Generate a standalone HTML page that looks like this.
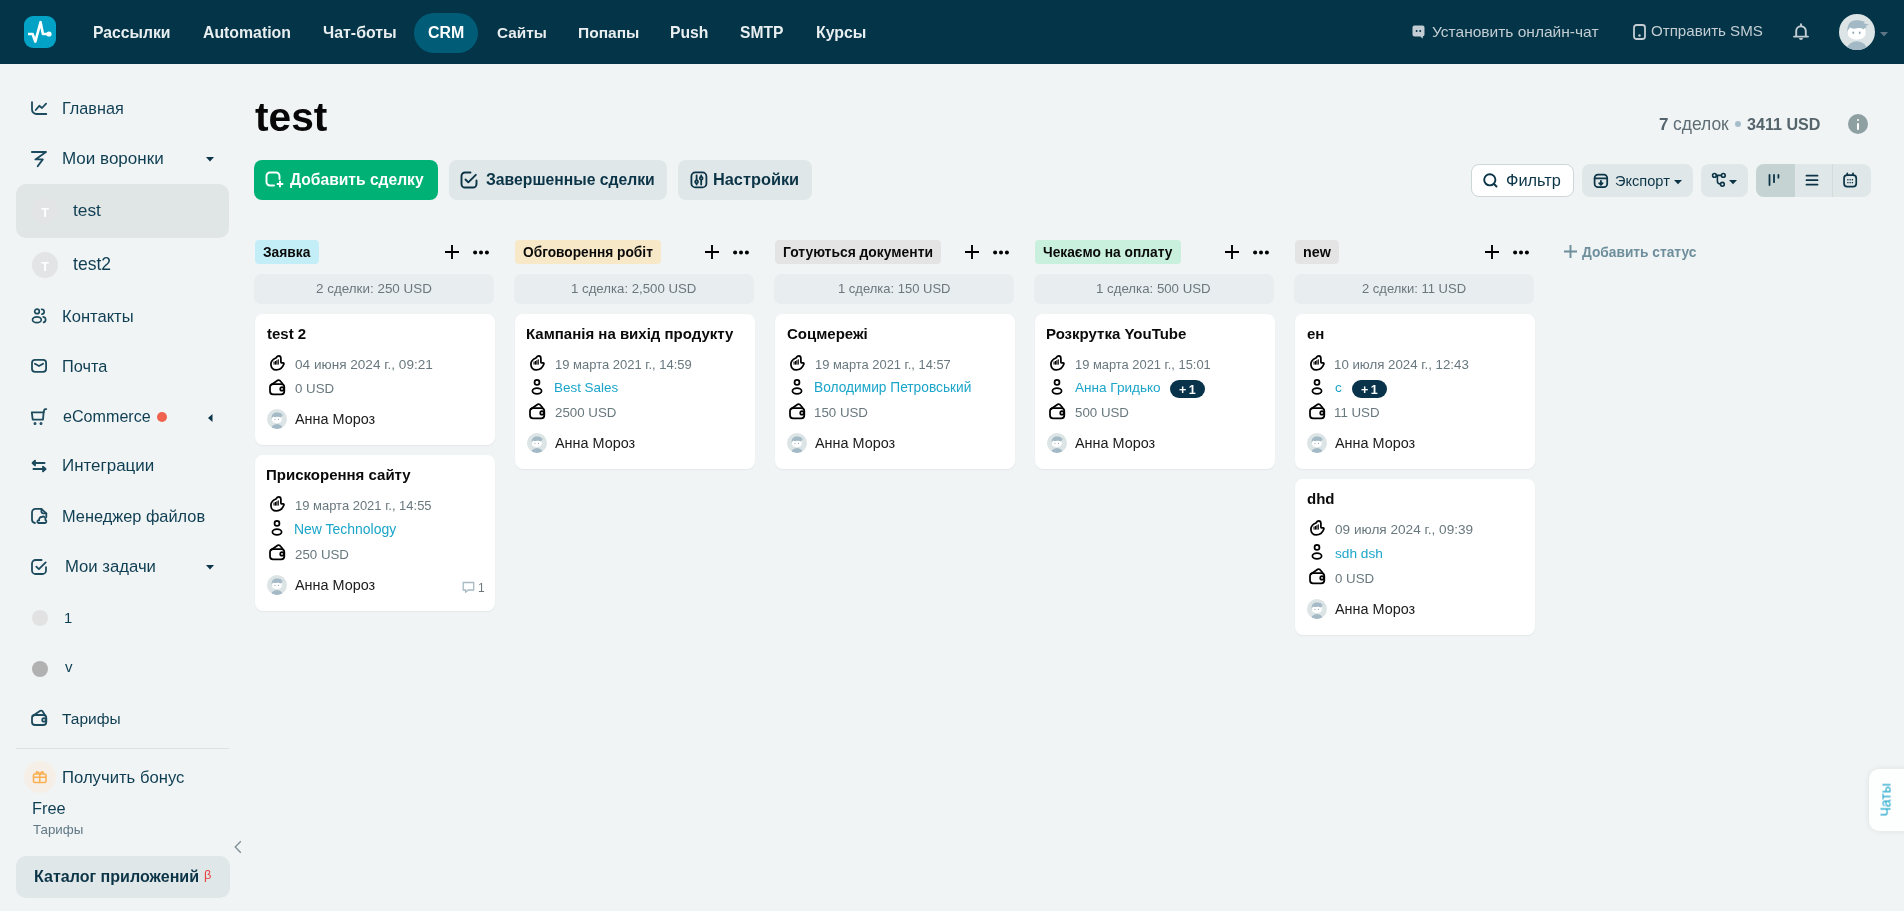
<!DOCTYPE html>
<html><head><meta charset="utf-8">
<style>
*{box-sizing:border-box;margin:0;padding:0}
html,body{width:1904px;height:911px;overflow:hidden;background:#f0f4f5;font-family:"Liberation Sans",sans-serif;position:relative;-webkit-font-smoothing:antialiased}
.a{position:absolute}
.t{position:absolute;white-space:nowrap;line-height:1;will-change:transform}
.ic{position:absolute}
</style></head><body>
<div class="a" style="left:0;top:0;width:1904px;height:64px;background:#033447"></div>
<div class="a" style="left:24px;top:16px;width:32px;height:32px;border-radius:9px;background:#01a2c6"><svg width="32" height="32" viewBox="0 0 32 32" class="a" style="left:0;top:0"><path d="M4 18H8.6L11.3 25.6L16.6 6.2L18.9 18H25" fill="none" stroke="#fff" stroke-width="2.6" stroke-linejoin="round"/><circle cx="25" cy="18" r="2.6" fill="#fff"/></svg></div>
<div class="a" style="left:414px;top:13px;width:64px;height:40px;border-radius:20px;background:#015c77"></div>

<div class="t" style="left:93.40px;top:25.00px;font-size:15.73px;font-weight:700;color:#e9eef0;">Рассылки</div>
<div class="t" style="left:202.50px;top:25.00px;font-size:15.84px;font-weight:700;color:#e9eef0;">Automation</div>
<div class="t" style="left:322.70px;top:25.00px;font-size:15.93px;font-weight:700;color:#e9eef0;">Чат-боты</div>
<div class="t" style="left:428.00px;top:25.00px;font-size:15.91px;font-weight:700;color:#fff;">CRM</div>
<div class="t" style="left:496.60px;top:25.00px;font-size:15.31px;font-weight:700;color:#e9eef0;">Сайты</div>
<div class="t" style="left:577.50px;top:25.00px;font-size:15.53px;font-weight:700;color:#e9eef0;">Попапы</div>
<div class="t" style="left:669.90px;top:25.00px;font-size:15.72px;font-weight:700;color:#e9eef0;">Push</div>
<div class="t" style="left:740.20px;top:25.00px;font-size:15.62px;font-weight:700;color:#e9eef0;">SMTP</div>
<div class="t" style="left:815.80px;top:25.00px;font-size:15.86px;font-weight:700;color:#e9eef0;">Курсы</div>
<svg class="ic" style="left:1412px;top:25px" width="13" height="14" viewBox="0 0 13 14"><path d="M2.5 0.5H10.5A2 2 0 0 1 12.5 2.5V9.5A2 2 0 0 1 10.8 11.5V13.8L8.4 11.5H2.5A2 2 0 0 1 0.5 9.5V2.5A2 2 0 0 1 2.5 0.5Z" fill="#c3cdd3"/><circle cx="4.6" cy="6" r="1" fill="#033447"/><circle cx="8.2" cy="6" r="1" fill="#033447"/></svg>
<div class="t" style="left:1432.40px;top:24.00px;font-size:15.53px;font-weight:400;color:#c3cdd3;">Установить онлайн-чат</div>
<svg class="ic" style="left:1633px;top:24px" width="13" height="16" viewBox="0 0 13 16"><rect x="1" y="1" width="11" height="14" rx="2.5" fill="none" stroke="#c3cdd3" stroke-width="1.8"/><circle cx="6.5" cy="11.5" r="1.2" fill="#c3cdd3"/></svg>
<div class="t" style="left:1650.60px;top:23.00px;font-size:15.12px;font-weight:400;color:#c3cdd3;">Отправить SMS</div>
<svg class="ic" style="left:1793px;top:23px" width="16" height="17" viewBox="0 0 16 17"><path d="M8 1.2V2.6M3.2 13.2V8A4.8 4.8 0 0 1 12.8 8V13.2M1 13.6H15" fill="none" stroke="#c3cdd3" stroke-width="1.9" stroke-linecap="round"/><path d="M6 15A2 2 0 0 0 10 15Z" fill="#c3cdd3"/></svg>
<div class="a" style="left:1839px;top:14px;width:36px;height:36px;border-radius:50%;overflow:hidden"><svg width="36" height="36" viewBox="0 0 36 36"><rect width="36" height="36" fill="#dce4e6"/><ellipse cx="17.9" cy="36.5" rx="10.5" ry="9.3" fill="#a3b9c5"/><path d="M8.8 17C8.8 14 11 12.5 13 12.5H22C25 12.5 26.5 14.5 26.5 17V19.5C26.5 23 23 25.5 17.6 25.5C12.5 25.5 8.8 23 8.8 19.5Z" fill="#fff"/><path d="M8.3 18C7.8 10 12 6.3 17 6.3C20.5 6.3 23 7 26 7.8L24.5 9.3L30 10.5L26.5 12L28 13.5C26 13.5 25 14.5 24.5 15.5C22.5 13.5 18 14 16 14.5C14 15 12.5 14.5 11.5 13.5C10 14.5 9 16 8.3 18Z" fill="#a3b9c5"/><ellipse cx="14.3" cy="18.7" rx="0.9" ry="1.3" fill="#8fa6b2"/><ellipse cx="20.7" cy="18.7" rx="0.9" ry="1.3" fill="#8fa6b2"/></svg></div>
<svg class="ic" style="left:1880px;top:32px" width="8" height="5" viewBox="0 0 8 5"><path d="M0 0H8L4 4.5Z" fill="#5d7686"/></svg>

<svg class="ic" style="left:26px;top:96px" width="26" height="26" viewBox="0 0 26 26" fill="none" stroke="#1d4b5e" stroke-width="1.8" stroke-linecap="round" stroke-linejoin="round"><path d="M6 6.1V13.6A4.4 4.4 0 0 0 10.4 18H20.3"/><path d="M9.7 14L13.3 9.8L16 12L20.1 7.6"/></svg>
<svg class="ic" style="left:26px;top:146px" width="26" height="26" viewBox="0 0 26 26" fill="none" stroke="#1d4b5e" stroke-width="1.85" stroke-linecap="round" stroke-linejoin="round"><path d="M5.9 6H20L9.4 13.4H16.8L11.7 20.3"/></svg>
<svg class="ic" style="left:206px;top:157px" width="8" height="5" viewBox="0 0 8 5"><path d="M0 0H8L4 4.5Z" fill="#0b3447"/></svg>
<div class="a" style="left:16px;top:184px;width:213px;height:54px;border-radius:10px;background:#e0e5e6"></div>
<div class="a" style="left:32px;top:198px;width:26px;height:26px;border-radius:50%;background:#e3e4e5;color:#fff;font-weight:700;font-size:12.5px;line-height:31px;text-align:center;will-change:transform">T</div>
<div class="a" style="left:32px;top:252px;width:26px;height:26px;border-radius:50%;background:#e3e4e5;color:#fff;font-weight:700;font-size:12.5px;line-height:31px;text-align:center;will-change:transform">T</div>
<svg class="ic" style="left:26px;top:303px" width="26" height="26" viewBox="0 0 26 26" fill="none" stroke="#1d4b5e" stroke-width="1.7" stroke-linecap="round"><circle cx="11" cy="8.4" r="2.3"/><ellipse cx="10.9" cy="16.8" rx="4.4" ry="2.9"/><path d="M15.6 6.3A2.4 2.4 0 0 1 15.9 11.1"/><path d="M17.2 13.8A3 2.9 0 0 1 17.6 19.4"/></svg>
<svg class="ic" style="left:26px;top:353px" width="26" height="26" viewBox="0 0 26 26" fill="none" stroke="#1d4b5e" stroke-width="1.8" stroke-linecap="round" stroke-linejoin="round"><rect x="6" y="6.9" width="14.1" height="11.9" rx="3"/><path d="M8.9 10.7L13 13L17.1 10.7"/></svg>
<svg class="ic" style="left:26px;top:403px" width="26" height="26" viewBox="0 0 26 26" fill="none" stroke="#1d4b5e" stroke-width="1.8" stroke-linecap="round" stroke-linejoin="round"><path d="M5.8 9.4H17.6L17 16.6H6.7Z"/><path d="M17.6 9.4L18.3 6.8Q18.6 6.1 19.4 6.1H20.3"/><circle cx="9" cy="20.4" r="0.6" fill="#1d4b5e"/><circle cx="15" cy="20.4" r="0.6" fill="#1d4b5e"/></svg>
<div class="a" style="left:156.7px;top:411.8px;width:10.5px;height:10.5px;border-radius:50%;background:#f0624d"></div>
<svg class="ic" style="left:208px;top:413.5px" width="5" height="8" viewBox="0 0 5 8"><path d="M4.5 0V8L0 4Z" fill="#0b3447"/></svg>
<svg class="ic" style="left:26px;top:453px" width="26" height="26" viewBox="0 0 26 26" fill="#1d4b5e" stroke="#1d4b5e" stroke-width="1.8" stroke-linecap="round" stroke-linejoin="round"><path d="M18.6 10H7.5" fill="none"/><path d="M6.5 10L9 7.6V12.4Z"/><path d="M7.4 16H18.6" fill="none"/><path d="M19.6 16L17 13.6V18.4Z"/></svg>
<svg class="ic" style="left:26px;top:503px" width="26" height="26" viewBox="0 0 26 26" fill="none" stroke="#1d4b5e" stroke-width="1.8" stroke-linecap="round" stroke-linejoin="round"><path d="M8.9 20A3.5 3.5 0 0 1 6 16.5V9.4A3.5 3.5 0 0 1 9.5 5.9H15.4L20.3 10.3V14"/><path d="M15.4 5.9V8.6A1.7 1.7 0 0 0 17.1 10.3H20.3"/><path d="M12.3 20H19A1.6 1.6 0 0 0 19.3 16.9A2.4 2.4 0 0 0 15.7 14A2.5 2.5 0 0 0 13.2 17.3A1.4 1.4 0 0 0 12.3 20Z"/></svg>
<svg class="ic" style="left:26px;top:554px" width="26" height="26" viewBox="0 0 26 26" fill="none" stroke="#1d4b5e" stroke-width="1.8" stroke-linecap="round" stroke-linejoin="round"><path d="M15.6 6H9.5A3.5 3.5 0 0 0 6 9.5V16.5A3.5 3.5 0 0 0 9.5 20H16.5A3.5 3.5 0 0 0 20 16.5V13.1"/><path d="M10.3 12.6L12.9 15.1L19.7 8.4"/></svg>
<svg class="ic" style="left:206px;top:564.5px" width="8" height="5" viewBox="0 0 8 5"><path d="M0 0H8L4 4.5Z" fill="#0b3447"/></svg>
<div class="a" style="left:32px;top:610px;width:16px;height:16px;border-radius:50%;background:#e2e2e2"></div>
<div class="a" style="left:32px;top:661px;width:16px;height:16px;border-radius:50%;background:#b1b1b1"></div>
<svg class="ic" style="left:26px;top:705px" width="26" height="26" viewBox="0 0 26 26" fill="none" stroke="#1d4b5e" stroke-width="1.8" stroke-linecap="round" stroke-linejoin="round"><rect x="6" y="10" width="14.3" height="10" rx="3"/><path d="M6.5 11L14.3 5.8Q15.5 5.2 16.5 6.2L18.9 10"/><circle cx="18" cy="14.9" r="1.75"/></svg>
<div class="a" style="left:16px;top:747.5px;width:213px;height:1px;background:#dce3e6"></div>
<div class="a" style="left:24px;top:761px;width:32px;height:32px;border-radius:50%;background:#f5efe7"></div>
<svg class="ic" style="left:32px;top:769px" width="16" height="15" viewBox="0 0 16 15" fill="none" stroke="#fcb053" stroke-width="1.6" stroke-linejoin="round"><rect x="1.5" y="5" width="12.5" height="8.5" rx="1.2"/><path d="M1.5 8.2H14M7.75 5V13.5"/><path d="M7.75 5C6 2 3.5 2.5 4.5 4.5M7.75 5C9.5 2 12 2.5 11 4.5"/></svg>
<svg class="ic" style="left:233px;top:840px" width="10" height="14" viewBox="0 0 10 14"><path d="M7.8 1.2L2.2 7L7.8 12.8" fill="none" stroke="#7e8e95" stroke-width="1.3"/></svg>
<div class="a" style="left:16px;top:856px;width:214px;height:42px;border-radius:10px;background:#e0e7e8"></div>

<div class="t" style="left:61.50px;top:100.00px;font-size:16.23px;font-weight:400;color:#0f3e52;">Главная</div>
<div class="t" style="left:61.50px;top:150.00px;font-size:17.03px;font-weight:400;color:#0f3e52;">Мои воронки</div>
<div class="t" style="left:72.60px;top:202.00px;font-size:17.32px;font-weight:400;color:#0f3e52;">test</div>
<div class="t" style="left:72.60px;top:256.00px;font-size:17.56px;font-weight:400;color:#0f3e52;">test2</div>
<div class="t" style="left:61.50px;top:309.00px;font-size:16.59px;font-weight:400;color:#0f3e52;">Контакты</div>
<div class="t" style="left:61.50px;top:358.00px;font-size:16.32px;font-weight:400;color:#0f3e52;">Почта</div>
<div class="t" style="left:62.50px;top:408.00px;font-size:16.12px;font-weight:400;color:#0f3e52;">eCommerce</div>
<div class="t" style="left:61.50px;top:458.00px;font-size:16.97px;font-weight:400;color:#0f3e52;">Интеграции</div>
<div class="t" style="left:61.50px;top:508.00px;font-size:16.37px;font-weight:400;color:#0f3e52;">Менеджер файлов</div>
<div class="t" style="left:64.80px;top:559.00px;font-size:16.71px;font-weight:400;color:#0f3e52;">Мои задачи</div>
<div class="t" style="left:62.20px;top:711.00px;font-size:15.51px;font-weight:400;color:#0f3e52;">Тарифы</div>
<div class="t" style="left:61.50px;top:770.00px;font-size:16.68px;font-weight:400;color:#0f3e52;">Получить бонус</div>
<div class="t" style="left:31.60px;top:800.00px;font-size:16.35px;font-weight:400;color:#0f3e52;">Free</div>
<div class="t" style="left:64.30px;top:611.00px;font-size:14.80px;font-weight:400;color:#0f3e52;">1</div>
<div class="t" style="left:65.30px;top:659.00px;font-size:15.00px;font-weight:400;color:#0f3e52;">v</div>
<div class="t" style="left:32.60px;top:823.00px;font-size:13.30px;font-weight:400;color:#5f7884;">Тарифы</div>
<div class="t" style="left:34.40px;top:868.00px;font-size:16.06px;font-weight:700;color:#0b3447;">Каталог приложений</div>
<div class="t" style="left:204.20px;top:869.00px;font-size:12.81px;font-weight:400;color:#e8423f;">β</div>
<div class="t" style="left:254.70px;top:97.00px;font-size:40.69px;font-weight:700;color:#070707;">test</div>
<div class="a" style="left:254px;top:160px;width:184px;height:40px;border-radius:8px;background:#00b176"></div>
<svg class="ic" style="left:265px;top:171px" width="20" height="17" viewBox="0 0 20 17" fill="none" stroke="#fff" stroke-width="1.9" stroke-linecap="round" stroke-linejoin="round"><path d="M9 14.5H5A3.5 3.5 0 0 1 1.5 11V5A3.5 3.5 0 0 1 5 1.5H11A3.5 3.5 0 0 1 14.5 5V8"/><path d="M15 10.5V15.5M12.5 13H17.5"/></svg>
<div class="t" style="left:290.40px;top:172.00px;font-size:15.62px;font-weight:700;color:#fff;">Добавить сделку</div>
<div class="a" style="left:449px;top:160px;width:218px;height:40px;border-radius:8px;background:#e0e7e8"></div>
<svg class="ic" style="left:460px;top:171px" width="18" height="18" viewBox="0 0 18 18" fill="none" stroke="#0b3447" stroke-width="1.9" stroke-linecap="round" stroke-linejoin="round"><path d="M10.5 1.5H5A3.5 3.5 0 0 0 1.5 5V13A3.5 3.5 0 0 0 5 16.5H13A3.5 3.5 0 0 0 16.5 13V9.5"/><path d="M5.5 8.5L8.3 11.3L15.8 3.8"/></svg>
<div class="t" style="left:485.50px;top:172.00px;font-size:15.72px;font-weight:700;color:#0b3447;">Завершенные сделки</div>
<div class="a" style="left:678px;top:160px;width:134px;height:40px;border-radius:8px;background:#e0e7e8"></div>
<svg class="ic" style="left:690px;top:171px" width="18" height="18" viewBox="0 0 18 18" fill="none" stroke="#0b3447" stroke-width="1.8" stroke-linecap="round"><rect x="1.4" y="1.4" width="15" height="15" rx="4"/><path d="M6.6 4.5V13.5M11.2 4.5V13.5"/><circle cx="6.6" cy="10.8" r="1.4" fill="#e0e7e8"/><circle cx="11.2" cy="7.2" r="1.4" fill="#e0e7e8"/></svg>
<div class="t" style="left:713.40px;top:171.00px;font-size:16.34px;font-weight:700;color:#0b3447;">Настройки</div>
<div class="t" style="left:1658.90px;top:116.00px;font-size:17.00px;font-weight:700;color:#55636b;">7</div>
<div class="t" style="left:1673.40px;top:116.00px;font-size:17.47px;font-weight:400;color:#5f6e75;">сделок</div>
<div class="a" style="left:1735px;top:121px;width:6px;height:6px;border-radius:50%;background:#a5bccb"></div>
<div class="t" style="left:1746.90px;top:116.00px;font-size:16.11px;font-weight:700;color:#55636b;">3411 USD</div>
<div class="a" style="left:1848px;top:114px;width:20px;height:20px;border-radius:50%;background:#8fa0a3"></div><div class="a" style="left:1856.6px;top:118.5px;width:2.8px;height:2.8px;border-radius:50%;background:#fff"></div><div class="a" style="left:1856.6px;top:122.8px;width:2.8px;height:7px;border-radius:1.4px;background:#fff"></div>
<div class="a" style="left:1471px;top:164px;width:103px;height:33px;border-radius:8px;background:#fff;border:1px solid #cdd6d9"></div>
<svg class="ic" style="left:1482px;top:172px" width="17" height="17" viewBox="0 0 17 17" fill="none" stroke="#0b3447" stroke-width="1.9" stroke-linecap="round"><circle cx="7.8" cy="7.8" r="5.6"/><path d="M12 12L14.5 14.5"/></svg>
<div class="t" style="left:1505.70px;top:172.00px;font-size:16.34px;font-weight:400;color:#0b3447;">Фильтр</div>
<div class="a" style="left:1582px;top:164px;width:111px;height:33px;border-radius:8px;background:#e0e7e8"></div>
<svg class="ic" style="left:1592.5px;top:172.5px" width="16" height="16" viewBox="0 0 16 16" fill="none" stroke="#0b3447" stroke-width="1.75" stroke-linecap="round" stroke-linejoin="round"><rect x="1.6" y="1.6" width="12.6" height="12.6" rx="3.4"/><path d="M1.7 5.4H14.1"/><path d="M7.9 7.8V11.6M6.2 10.1L7.9 11.8L9.6 10.1"/></svg>
<div class="t" style="left:1615.00px;top:174.00px;font-size:14.60px;font-weight:400;color:#0b3447;">Экспорт</div>
<svg class="ic" style="left:1673.6px;top:179.7px" width="8" height="5" viewBox="0 0 8 5"><path d="M0 0H8L4 4.3Z" fill="#0b3447"/></svg>
<div class="a" style="left:1701px;top:164px;width:47px;height:33px;border-radius:8px;background:#e0e7e8"></div>
<svg class="ic" style="left:1711px;top:172px" width="17" height="17" viewBox="0 0 17 17" fill="none" stroke="#0b3447" stroke-width="1.6" stroke-linecap="round"><circle cx="3.5" cy="3.4" r="1.9"/><circle cx="12.3" cy="3.4" r="1.9"/><circle cx="11.4" cy="12.3" r="1.9"/><path d="M5.4 3.4H10.4M6.4 4.6V9.6Q6.4 11.9 9.5 12"/></svg>
<svg class="ic" style="left:1729px;top:179.7px" width="8" height="5" viewBox="0 0 8 5"><path d="M0 0H8L4 4.3Z" fill="#0b3447"/></svg>
<div class="a" style="left:1756px;top:164px;width:115px;height:33px;border-radius:8px;background:#e0e7e8;overflow:hidden"><div class="a" style="left:0;top:0;width:39px;height:33px;background:#c5d3d3"></div><div class="a" style="left:76px;top:0;width:1px;height:33px;background:#d3dbdb"></div></div>
<svg class="ic" style="left:1767px;top:172px" width="14" height="16" viewBox="0 0 14 16" stroke="#0b3447" stroke-width="1.8" stroke-linecap="round"><path d="M2.5 2.9V13M7 2.9V10.2M11.4 2.9V5.7"/></svg>
<svg class="ic" style="left:1805px;top:173.5px" width="14" height="13" viewBox="0 0 14 13" stroke="#0b3447" stroke-width="1.8" stroke-linecap="round"><path d="M1.5 1.7H12.5M1.5 6.2H12.5M1.5 10.7H12.5"/></svg>
<svg class="ic" style="left:1842px;top:172px" width="16" height="16" viewBox="0 0 16 16" fill="none" stroke="#0b3447" stroke-width="1.7" stroke-linecap="round"><rect x="2.05" y="3.1" width="12.2" height="11.6" rx="3.2"/><path d="M5.3 1.3V3.1M11 1.3V3.1"/><g fill="#0b3447" stroke="none"><rect x="5.2" y="7.1" width="1.4" height="1.4" rx="0.4"/><rect x="7.45" y="7.1" width="1.4" height="1.4" rx="0.4"/><rect x="9.7" y="7.1" width="1.4" height="1.4" rx="0.4"/><rect x="5.2" y="9.9" width="1.4" height="1.4" rx="0.4"/><rect x="7.45" y="9.9" width="1.4" height="1.4" rx="0.4"/><rect x="9.7" y="9.9" width="1.4" height="1.4" rx="0.4"/></g></svg>
<div class="a" style="left:255px;top:240px;width:64px;height:24px;border-radius:4px;background:#c3eef7"></div>
<div class="t" style="left:263.00px;top:246.00px;font-size:13.78px;font-weight:700;color:#0a0a0a;">Заявка</div>
<svg class="ic" style="left:445px;top:245px" width="14" height="14" viewBox="0 0 14 14" stroke="#000" stroke-width="1.9"><path d="M7 0V14M0 7H14"/></svg>
<svg class="ic" style="left:473px;top:249.5px" width="16" height="5" viewBox="0 0 16 5" fill="#000"><circle cx="2.1" cy="2.4" r="2"/><circle cx="8" cy="2.4" r="2"/><circle cx="13.9" cy="2.4" r="2"/></svg>
<div class="a" style="left:254px;top:274px;width:240px;height:30px;border-radius:7px;background:#e8edf0"></div>
<div class="t" style="left:315.91px;top:282.00px;font-size:13.43px;font-weight:400;color:#6b777d;">2 сделки: 250 USD</div>
<div class="a" style="left:255px;top:314px;width:240px;height:131px;border-radius:8px;background:#fff;box-shadow:0 1px 1.5px rgba(20,40,50,0.06)"></div>
<div class="t" style="left:267.20px;top:326.00px;font-size:15.00px;font-weight:700;color:#0a0a0a;">test 2</div>
<svg class="ic" style="left:264px;top:351px" width="26" height="26" viewBox="0 0 26 26" fill="none" stroke="#000" stroke-width="1.75" stroke-linejoin="round"><path d="M6.9 13.2C6.9 10 9.3 8.1 11.9 7C12.9 5.6 13.6 4.9 14.7 4.9C16.2 4.9 16.9 5.9 16.9 7.5V11.3C16.9 11.6 17.1 11.8 17.4 11.8H19.2C19.9 11.8 20.1 12.5 19.8 13.3C18.6 16.5 15.7 18.9 12.2 18.9C9.1 18.9 6.9 16.5 6.9 13.2Z"/><g fill="#000" stroke="none"><rect x="9.5" y="10.6" width="1.1" height="3"/><rect x="10.9" y="10" width="1.1" height="3.6"/><rect x="12.3" y="9.2" width="1.1" height="4.4"/><rect x="13.7" y="8.4" width="1.1" height="5.2"/></g></svg>
<div class="t" style="left:294.80px;top:358.00px;font-size:13.59px;font-weight:400;color:#68787e;">04 июня 2024 г., 09:21</div>
<svg class="ic" style="left:264px;top:376.0px" width="26" height="26" viewBox="0 0 26 26" fill="none" stroke="#000" stroke-width="1.75" stroke-linejoin="round"><rect x="6" y="8" width="14.3" height="10.3" rx="3"/><path d="M6.6 9.2L13.8 4.3Q14.8 3.7 15.8 4.5L18.9 8"/><circle cx="18" cy="12.9" r="1.75"/></svg>
<div class="t" style="left:294.80px;top:382.00px;font-size:13.30px;font-weight:400;color:#68787e;">0 USD</div>
<div class="a" style="left:266.5px;top:409.0px;width:20px;height:20px;border-radius:50%;overflow:hidden"><svg width="20" height="20" viewBox="0 0 36 36"><rect width="36" height="36" fill="#dce4e6"/><ellipse cx="17.9" cy="36.5" rx="10.5" ry="9.3" fill="#a3b9c5"/><path d="M8.8 17C8.8 14 11 12.5 13 12.5H22C25 12.5 26.5 14.5 26.5 17V19.5C26.5 23 23 25.5 17.6 25.5C12.5 25.5 8.8 23 8.8 19.5Z" fill="#fff"/><path d="M8.3 18C7.8 10 12 6.3 17 6.3C20.5 6.3 23 7 26 7.8L24.5 9.3L30 10.5L26.5 12L28 13.5C26 13.5 25 14.5 24.5 15.5C22.5 13.5 18 14 16 14.5C14 15 12.5 14.5 11.5 13.5C10 14.5 9 16 8.3 18Z" fill="#a3b9c5"/><ellipse cx="14.3" cy="18.7" rx="0.9" ry="1.3" fill="#8fa6b2"/><ellipse cx="20.7" cy="18.7" rx="0.9" ry="1.3" fill="#8fa6b2"/></svg></div>
<div class="t" style="left:295.00px;top:412.00px;font-size:14.42px;font-weight:400;color:#1b1b1b;">Анна Мороз</div>
<div class="a" style="left:255px;top:455px;width:240px;height:156px;border-radius:8px;background:#fff;box-shadow:0 1px 1.5px rgba(20,40,50,0.06)"></div>
<div class="t" style="left:266.20px;top:467.00px;font-size:15.00px;font-weight:700;color:#0a0a0a;">Прискорення сайту</div>
<svg class="ic" style="left:264px;top:492px" width="26" height="26" viewBox="0 0 26 26" fill="none" stroke="#000" stroke-width="1.75" stroke-linejoin="round"><path d="M6.9 13.2C6.9 10 9.3 8.1 11.9 7C12.9 5.6 13.6 4.9 14.7 4.9C16.2 4.9 16.9 5.9 16.9 7.5V11.3C16.9 11.6 17.1 11.8 17.4 11.8H19.2C19.9 11.8 20.1 12.5 19.8 13.3C18.6 16.5 15.7 18.9 12.2 18.9C9.1 18.9 6.9 16.5 6.9 13.2Z"/><g fill="#000" stroke="none"><rect x="9.5" y="10.6" width="1.1" height="3"/><rect x="10.9" y="10" width="1.1" height="3.6"/><rect x="12.3" y="9.2" width="1.1" height="4.4"/><rect x="13.7" y="8.4" width="1.1" height="5.2"/></g></svg>
<div class="t" style="left:294.80px;top:499.00px;font-size:12.98px;font-weight:400;color:#68787e;">19 марта 2021 г., 14:55</div>
<svg class="ic" style="left:264px;top:514.6px" width="26" height="26" viewBox="0 0 26 26" fill="none" stroke="#000" stroke-width="1.75"><circle cx="13" cy="8.4" r="2.45"/><ellipse cx="13" cy="16.9" rx="4.6" ry="2.85"/></svg>
<div class="t" style="left:294.00px;top:522.00px;font-size:13.98px;font-weight:400;color:#1ba5c9;">New Technology</div>
<svg class="ic" style="left:264px;top:541.0px" width="26" height="26" viewBox="0 0 26 26" fill="none" stroke="#000" stroke-width="1.75" stroke-linejoin="round"><rect x="6" y="8" width="14.3" height="10.3" rx="3"/><path d="M6.6 9.2L13.8 4.3Q14.8 3.7 15.8 4.5L18.9 8"/><circle cx="18" cy="12.9" r="1.75"/></svg>
<div class="t" style="left:294.80px;top:548.00px;font-size:13.30px;font-weight:400;color:#68787e;">250 USD</div>
<div class="a" style="left:266.5px;top:575.0px;width:20px;height:20px;border-radius:50%;overflow:hidden"><svg width="20" height="20" viewBox="0 0 36 36"><rect width="36" height="36" fill="#dce4e6"/><ellipse cx="17.9" cy="36.5" rx="10.5" ry="9.3" fill="#a3b9c5"/><path d="M8.8 17C8.8 14 11 12.5 13 12.5H22C25 12.5 26.5 14.5 26.5 17V19.5C26.5 23 23 25.5 17.6 25.5C12.5 25.5 8.8 23 8.8 19.5Z" fill="#fff"/><path d="M8.3 18C7.8 10 12 6.3 17 6.3C20.5 6.3 23 7 26 7.8L24.5 9.3L30 10.5L26.5 12L28 13.5C26 13.5 25 14.5 24.5 15.5C22.5 13.5 18 14 16 14.5C14 15 12.5 14.5 11.5 13.5C10 14.5 9 16 8.3 18Z" fill="#a3b9c5"/><ellipse cx="14.3" cy="18.7" rx="0.9" ry="1.3" fill="#8fa6b2"/><ellipse cx="20.7" cy="18.7" rx="0.9" ry="1.3" fill="#8fa6b2"/></svg></div>
<div class="t" style="left:295.00px;top:578.00px;font-size:14.42px;font-weight:400;color:#1b1b1b;">Анна Мороз</div>
<svg class="ic" style="left:461.5px;top:580.5px" width="13" height="13" viewBox="0 0 13 13" fill="none" stroke="#a7bac4" stroke-width="1.3" stroke-linejoin="round"><path d="M1.2 1.5H11.7V9H6.2L3.6 11.3V9H1.2Z"/></svg>
<div class="t" style="left:478.00px;top:582.00px;font-size:12.00px;font-weight:400;color:#6b777d;">1</div>
<div class="a" style="left:515px;top:240px;width:146px;height:24px;border-radius:4px;background:#f7e8c7"></div>
<div class="t" style="left:523.00px;top:246.00px;font-size:13.72px;font-weight:700;color:#0a0a0a;">Обговорення робіт</div>
<svg class="ic" style="left:705px;top:245px" width="14" height="14" viewBox="0 0 14 14" stroke="#000" stroke-width="1.9"><path d="M7 0V14M0 7H14"/></svg>
<svg class="ic" style="left:733px;top:249.5px" width="16" height="5" viewBox="0 0 16 5" fill="#000"><circle cx="2.1" cy="2.4" r="2"/><circle cx="8" cy="2.4" r="2"/><circle cx="13.9" cy="2.4" r="2"/></svg>
<div class="a" style="left:514px;top:274px;width:240px;height:30px;border-radius:7px;background:#e8edf0"></div>
<div class="t" style="left:571.07px;top:282.00px;font-size:13.22px;font-weight:400;color:#6b777d;">1 сделка: 2,500 USD</div>
<div class="a" style="left:515px;top:314px;width:240px;height:155px;border-radius:8px;background:#fff;box-shadow:0 1px 1.5px rgba(20,40,50,0.06)"></div>
<div class="t" style="left:526.20px;top:326.00px;font-size:15.00px;font-weight:700;color:#0a0a0a;">Кампанія на вихід продукту</div>
<svg class="ic" style="left:524px;top:351px" width="26" height="26" viewBox="0 0 26 26" fill="none" stroke="#000" stroke-width="1.75" stroke-linejoin="round"><path d="M6.9 13.2C6.9 10 9.3 8.1 11.9 7C12.9 5.6 13.6 4.9 14.7 4.9C16.2 4.9 16.9 5.9 16.9 7.5V11.3C16.9 11.6 17.1 11.8 17.4 11.8H19.2C19.9 11.8 20.1 12.5 19.8 13.3C18.6 16.5 15.7 18.9 12.2 18.9C9.1 18.9 6.9 16.5 6.9 13.2Z"/><g fill="#000" stroke="none"><rect x="9.5" y="10.6" width="1.1" height="3"/><rect x="10.9" y="10" width="1.1" height="3.6"/><rect x="12.3" y="9.2" width="1.1" height="4.4"/><rect x="13.7" y="8.4" width="1.1" height="5.2"/></g></svg>
<div class="t" style="left:554.80px;top:358.00px;font-size:12.99px;font-weight:400;color:#68787e;">19 марта 2021 г., 14:59</div>
<svg class="ic" style="left:524px;top:373.6px" width="26" height="26" viewBox="0 0 26 26" fill="none" stroke="#000" stroke-width="1.75"><circle cx="13" cy="8.4" r="2.45"/><ellipse cx="13" cy="16.9" rx="4.6" ry="2.85"/></svg>
<div class="t" style="left:554.00px;top:381.00px;font-size:13.45px;font-weight:400;color:#1ba5c9;">Best Sales</div>
<svg class="ic" style="left:524px;top:399.5px" width="26" height="26" viewBox="0 0 26 26" fill="none" stroke="#000" stroke-width="1.75" stroke-linejoin="round"><rect x="6" y="8" width="14.3" height="10.3" rx="3"/><path d="M6.6 9.2L13.8 4.3Q14.8 3.7 15.8 4.5L18.9 8"/><circle cx="18" cy="12.9" r="1.75"/></svg>
<div class="t" style="left:554.80px;top:406.00px;font-size:13.30px;font-weight:400;color:#68787e;">2500 USD</div>
<div class="a" style="left:526.5px;top:433.0px;width:20px;height:20px;border-radius:50%;overflow:hidden"><svg width="20" height="20" viewBox="0 0 36 36"><rect width="36" height="36" fill="#dce4e6"/><ellipse cx="17.9" cy="36.5" rx="10.5" ry="9.3" fill="#a3b9c5"/><path d="M8.8 17C8.8 14 11 12.5 13 12.5H22C25 12.5 26.5 14.5 26.5 17V19.5C26.5 23 23 25.5 17.6 25.5C12.5 25.5 8.8 23 8.8 19.5Z" fill="#fff"/><path d="M8.3 18C7.8 10 12 6.3 17 6.3C20.5 6.3 23 7 26 7.8L24.5 9.3L30 10.5L26.5 12L28 13.5C26 13.5 25 14.5 24.5 15.5C22.5 13.5 18 14 16 14.5C14 15 12.5 14.5 11.5 13.5C10 14.5 9 16 8.3 18Z" fill="#a3b9c5"/><ellipse cx="14.3" cy="18.7" rx="0.9" ry="1.3" fill="#8fa6b2"/><ellipse cx="20.7" cy="18.7" rx="0.9" ry="1.3" fill="#8fa6b2"/></svg></div>
<div class="t" style="left:555.00px;top:436.00px;font-size:14.42px;font-weight:400;color:#1b1b1b;">Анна Мороз</div>
<div class="a" style="left:775px;top:240px;width:166px;height:24px;border-radius:4px;background:#e4e4e4"></div>
<div class="t" style="left:783.00px;top:246.00px;font-size:13.86px;font-weight:700;color:#0a0a0a;">Готуються документи</div>
<svg class="ic" style="left:965px;top:245px" width="14" height="14" viewBox="0 0 14 14" stroke="#000" stroke-width="1.9"><path d="M7 0V14M0 7H14"/></svg>
<svg class="ic" style="left:993px;top:249.5px" width="16" height="5" viewBox="0 0 16 5" fill="#000"><circle cx="2.1" cy="2.4" r="2"/><circle cx="8" cy="2.4" r="2"/><circle cx="13.9" cy="2.4" r="2"/></svg>
<div class="a" style="left:774px;top:274px;width:240px;height:30px;border-radius:7px;background:#e8edf0"></div>
<div class="t" style="left:837.95px;top:282.00px;font-size:13.00px;font-weight:400;color:#6b777d;">1 сделка: 150 USD</div>
<div class="a" style="left:775px;top:314px;width:240px;height:155px;border-radius:8px;background:#fff;box-shadow:0 1px 1.5px rgba(20,40,50,0.06)"></div>
<div class="t" style="left:787.20px;top:326.00px;font-size:15.00px;font-weight:700;color:#0a0a0a;">Соцмережі</div>
<svg class="ic" style="left:784px;top:351px" width="26" height="26" viewBox="0 0 26 26" fill="none" stroke="#000" stroke-width="1.75" stroke-linejoin="round"><path d="M6.9 13.2C6.9 10 9.3 8.1 11.9 7C12.9 5.6 13.6 4.9 14.7 4.9C16.2 4.9 16.9 5.9 16.9 7.5V11.3C16.9 11.6 17.1 11.8 17.4 11.8H19.2C19.9 11.8 20.1 12.5 19.8 13.3C18.6 16.5 15.7 18.9 12.2 18.9C9.1 18.9 6.9 16.5 6.9 13.2Z"/><g fill="#000" stroke="none"><rect x="9.5" y="10.6" width="1.1" height="3"/><rect x="10.9" y="10" width="1.1" height="3.6"/><rect x="12.3" y="9.2" width="1.1" height="4.4"/><rect x="13.7" y="8.4" width="1.1" height="5.2"/></g></svg>
<div class="t" style="left:814.80px;top:359.00px;font-size:12.90px;font-weight:400;color:#68787e;">19 марта 2021 г., 14:57</div>
<svg class="ic" style="left:784px;top:373.6px" width="26" height="26" viewBox="0 0 26 26" fill="none" stroke="#000" stroke-width="1.75"><circle cx="13" cy="8.4" r="2.45"/><ellipse cx="13" cy="16.9" rx="4.6" ry="2.85"/></svg>
<div class="t" style="left:814.00px;top:381.00px;font-size:13.74px;font-weight:400;color:#1ba5c9;">Володимир Петровський</div>
<svg class="ic" style="left:784px;top:399.5px" width="26" height="26" viewBox="0 0 26 26" fill="none" stroke="#000" stroke-width="1.75" stroke-linejoin="round"><rect x="6" y="8" width="14.3" height="10.3" rx="3"/><path d="M6.6 9.2L13.8 4.3Q14.8 3.7 15.8 4.5L18.9 8"/><circle cx="18" cy="12.9" r="1.75"/></svg>
<div class="t" style="left:813.80px;top:406.00px;font-size:13.30px;font-weight:400;color:#68787e;">150 USD</div>
<div class="a" style="left:786.5px;top:433.0px;width:20px;height:20px;border-radius:50%;overflow:hidden"><svg width="20" height="20" viewBox="0 0 36 36"><rect width="36" height="36" fill="#dce4e6"/><ellipse cx="17.9" cy="36.5" rx="10.5" ry="9.3" fill="#a3b9c5"/><path d="M8.8 17C8.8 14 11 12.5 13 12.5H22C25 12.5 26.5 14.5 26.5 17V19.5C26.5 23 23 25.5 17.6 25.5C12.5 25.5 8.8 23 8.8 19.5Z" fill="#fff"/><path d="M8.3 18C7.8 10 12 6.3 17 6.3C20.5 6.3 23 7 26 7.8L24.5 9.3L30 10.5L26.5 12L28 13.5C26 13.5 25 14.5 24.5 15.5C22.5 13.5 18 14 16 14.5C14 15 12.5 14.5 11.5 13.5C10 14.5 9 16 8.3 18Z" fill="#a3b9c5"/><ellipse cx="14.3" cy="18.7" rx="0.9" ry="1.3" fill="#8fa6b2"/><ellipse cx="20.7" cy="18.7" rx="0.9" ry="1.3" fill="#8fa6b2"/></svg></div>
<div class="t" style="left:815.00px;top:436.00px;font-size:14.42px;font-weight:400;color:#1b1b1b;">Анна Мороз</div>
<div class="a" style="left:1035px;top:240px;width:146px;height:24px;border-radius:4px;background:#c8f0dc"></div>
<div class="t" style="left:1043.00px;top:246.00px;font-size:13.78px;font-weight:700;color:#0a0a0a;">Чекаємо на оплату</div>
<svg class="ic" style="left:1225px;top:245px" width="14" height="14" viewBox="0 0 14 14" stroke="#000" stroke-width="1.9"><path d="M7 0V14M0 7H14"/></svg>
<svg class="ic" style="left:1253px;top:249.5px" width="16" height="5" viewBox="0 0 16 5" fill="#000"><circle cx="2.1" cy="2.4" r="2"/><circle cx="8" cy="2.4" r="2"/><circle cx="13.9" cy="2.4" r="2"/></svg>
<div class="a" style="left:1034px;top:274px;width:240px;height:30px;border-radius:7px;background:#e8edf0"></div>
<div class="t" style="left:1096.46px;top:282.00px;font-size:13.26px;font-weight:400;color:#6b777d;">1 сделка: 500 USD</div>
<div class="a" style="left:1035px;top:314px;width:240px;height:155px;border-radius:8px;background:#fff;box-shadow:0 1px 1.5px rgba(20,40,50,0.06)"></div>
<div class="t" style="left:1046.20px;top:326.00px;font-size:15.00px;font-weight:700;color:#0a0a0a;">Розкрутка YouTube</div>
<svg class="ic" style="left:1044px;top:351px" width="26" height="26" viewBox="0 0 26 26" fill="none" stroke="#000" stroke-width="1.75" stroke-linejoin="round"><path d="M6.9 13.2C6.9 10 9.3 8.1 11.9 7C12.9 5.6 13.6 4.9 14.7 4.9C16.2 4.9 16.9 5.9 16.9 7.5V11.3C16.9 11.6 17.1 11.8 17.4 11.8H19.2C19.9 11.8 20.1 12.5 19.8 13.3C18.6 16.5 15.7 18.9 12.2 18.9C9.1 18.9 6.9 16.5 6.9 13.2Z"/><g fill="#000" stroke="none"><rect x="9.5" y="10.6" width="1.1" height="3"/><rect x="10.9" y="10" width="1.1" height="3.6"/><rect x="12.3" y="9.2" width="1.1" height="4.4"/><rect x="13.7" y="8.4" width="1.1" height="5.2"/></g></svg>
<div class="t" style="left:1074.80px;top:359.00px;font-size:12.90px;font-weight:400;color:#68787e;">19 марта 2021 г., 15:01</div>
<svg class="ic" style="left:1044px;top:373.6px" width="26" height="26" viewBox="0 0 26 26" fill="none" stroke="#000" stroke-width="1.75"><circle cx="13" cy="8.4" r="2.45"/><ellipse cx="13" cy="16.9" rx="4.6" ry="2.85"/></svg>
<div class="t" style="left:1075.00px;top:381.00px;font-size:13.57px;font-weight:400;color:#1ba5c9;">Анна Гридько</div>
<div class="a" style="left:1170.1px;top:379.6px;width:35px;height:18.5px;border-radius:9.25px;background:#08334a"></div>
<div class="t" style="left:1179.22px;top:384.00px;font-size:12.50px;font-weight:700;color:#fff;">+ 1</div>
<svg class="ic" style="left:1044px;top:399.5px" width="26" height="26" viewBox="0 0 26 26" fill="none" stroke="#000" stroke-width="1.75" stroke-linejoin="round"><rect x="6" y="8" width="14.3" height="10.3" rx="3"/><path d="M6.6 9.2L13.8 4.3Q14.8 3.7 15.8 4.5L18.9 8"/><circle cx="18" cy="12.9" r="1.75"/></svg>
<div class="t" style="left:1074.80px;top:406.00px;font-size:13.30px;font-weight:400;color:#68787e;">500 USD</div>
<div class="a" style="left:1046.5px;top:433.0px;width:20px;height:20px;border-radius:50%;overflow:hidden"><svg width="20" height="20" viewBox="0 0 36 36"><rect width="36" height="36" fill="#dce4e6"/><ellipse cx="17.9" cy="36.5" rx="10.5" ry="9.3" fill="#a3b9c5"/><path d="M8.8 17C8.8 14 11 12.5 13 12.5H22C25 12.5 26.5 14.5 26.5 17V19.5C26.5 23 23 25.5 17.6 25.5C12.5 25.5 8.8 23 8.8 19.5Z" fill="#fff"/><path d="M8.3 18C7.8 10 12 6.3 17 6.3C20.5 6.3 23 7 26 7.8L24.5 9.3L30 10.5L26.5 12L28 13.5C26 13.5 25 14.5 24.5 15.5C22.5 13.5 18 14 16 14.5C14 15 12.5 14.5 11.5 13.5C10 14.5 9 16 8.3 18Z" fill="#a3b9c5"/><ellipse cx="14.3" cy="18.7" rx="0.9" ry="1.3" fill="#8fa6b2"/><ellipse cx="20.7" cy="18.7" rx="0.9" ry="1.3" fill="#8fa6b2"/></svg></div>
<div class="t" style="left:1075.00px;top:436.00px;font-size:14.42px;font-weight:400;color:#1b1b1b;">Анна Мороз</div>
<div class="a" style="left:1295px;top:240px;width:44px;height:24px;border-radius:4px;background:#e4e4e4"></div>
<div class="t" style="left:1303.00px;top:245.00px;font-size:14.30px;font-weight:700;color:#0a0a0a;">new</div>
<svg class="ic" style="left:1485px;top:245px" width="14" height="14" viewBox="0 0 14 14" stroke="#000" stroke-width="1.9"><path d="M7 0V14M0 7H14"/></svg>
<svg class="ic" style="left:1513px;top:249.5px" width="16" height="5" viewBox="0 0 16 5" fill="#000"><circle cx="2.1" cy="2.4" r="2"/><circle cx="8" cy="2.4" r="2"/><circle cx="13.9" cy="2.4" r="2"/></svg>
<div class="a" style="left:1294px;top:274px;width:240px;height:30px;border-radius:7px;background:#e8edf0"></div>
<div class="t" style="left:1362.18px;top:282.00px;font-size:13.00px;font-weight:400;color:#6b777d;">2 сделки: 11 USD</div>
<div class="a" style="left:1295px;top:314px;width:240px;height:155px;border-radius:8px;background:#fff;box-shadow:0 1px 1.5px rgba(20,40,50,0.06)"></div>
<div class="t" style="left:1307.20px;top:326.00px;font-size:15.00px;font-weight:700;color:#0a0a0a;">ен</div>
<svg class="ic" style="left:1304px;top:351px" width="26" height="26" viewBox="0 0 26 26" fill="none" stroke="#000" stroke-width="1.75" stroke-linejoin="round"><path d="M6.9 13.2C6.9 10 9.3 8.1 11.9 7C12.9 5.6 13.6 4.9 14.7 4.9C16.2 4.9 16.9 5.9 16.9 7.5V11.3C16.9 11.6 17.1 11.8 17.4 11.8H19.2C19.9 11.8 20.1 12.5 19.8 13.3C18.6 16.5 15.7 18.9 12.2 18.9C9.1 18.9 6.9 16.5 6.9 13.2Z"/><g fill="#000" stroke="none"><rect x="9.5" y="10.6" width="1.1" height="3"/><rect x="10.9" y="10" width="1.1" height="3.6"/><rect x="12.3" y="9.2" width="1.1" height="4.4"/><rect x="13.7" y="8.4" width="1.1" height="5.2"/></g></svg>
<div class="t" style="left:1333.80px;top:358.00px;font-size:13.27px;font-weight:400;color:#68787e;">10 июля 2024 г., 12:43</div>
<svg class="ic" style="left:1304px;top:373.6px" width="26" height="26" viewBox="0 0 26 26" fill="none" stroke="#000" stroke-width="1.75"><circle cx="13" cy="8.4" r="2.45"/><ellipse cx="13" cy="16.9" rx="4.6" ry="2.85"/></svg>
<div class="t" style="left:1335.00px;top:381.00px;font-size:13.60px;font-weight:400;color:#1ba5c9;">с</div>
<div class="a" style="left:1351.8px;top:379.6px;width:35px;height:18.5px;border-radius:9.25px;background:#08334a"></div>
<div class="t" style="left:1360.92px;top:384.00px;font-size:12.50px;font-weight:700;color:#fff;">+ 1</div>
<svg class="ic" style="left:1304px;top:399.5px" width="26" height="26" viewBox="0 0 26 26" fill="none" stroke="#000" stroke-width="1.75" stroke-linejoin="round"><rect x="6" y="8" width="14.3" height="10.3" rx="3"/><path d="M6.6 9.2L13.8 4.3Q14.8 3.7 15.8 4.5L18.9 8"/><circle cx="18" cy="12.9" r="1.75"/></svg>
<div class="t" style="left:1333.80px;top:406.00px;font-size:13.30px;font-weight:400;color:#68787e;">11 USD</div>
<div class="a" style="left:1306.5px;top:433.0px;width:20px;height:20px;border-radius:50%;overflow:hidden"><svg width="20" height="20" viewBox="0 0 36 36"><rect width="36" height="36" fill="#dce4e6"/><ellipse cx="17.9" cy="36.5" rx="10.5" ry="9.3" fill="#a3b9c5"/><path d="M8.8 17C8.8 14 11 12.5 13 12.5H22C25 12.5 26.5 14.5 26.5 17V19.5C26.5 23 23 25.5 17.6 25.5C12.5 25.5 8.8 23 8.8 19.5Z" fill="#fff"/><path d="M8.3 18C7.8 10 12 6.3 17 6.3C20.5 6.3 23 7 26 7.8L24.5 9.3L30 10.5L26.5 12L28 13.5C26 13.5 25 14.5 24.5 15.5C22.5 13.5 18 14 16 14.5C14 15 12.5 14.5 11.5 13.5C10 14.5 9 16 8.3 18Z" fill="#a3b9c5"/><ellipse cx="14.3" cy="18.7" rx="0.9" ry="1.3" fill="#8fa6b2"/><ellipse cx="20.7" cy="18.7" rx="0.9" ry="1.3" fill="#8fa6b2"/></svg></div>
<div class="t" style="left:1335.00px;top:436.00px;font-size:14.42px;font-weight:400;color:#1b1b1b;">Анна Мороз</div>
<div class="a" style="left:1295px;top:479px;width:240px;height:156px;border-radius:8px;background:#fff;box-shadow:0 1px 1.5px rgba(20,40,50,0.06)"></div>
<div class="t" style="left:1307.20px;top:491.00px;font-size:15.00px;font-weight:700;color:#0a0a0a;">dhd</div>
<svg class="ic" style="left:1304px;top:516px" width="26" height="26" viewBox="0 0 26 26" fill="none" stroke="#000" stroke-width="1.75" stroke-linejoin="round"><path d="M6.9 13.2C6.9 10 9.3 8.1 11.9 7C12.9 5.6 13.6 4.9 14.7 4.9C16.2 4.9 16.9 5.9 16.9 7.5V11.3C16.9 11.6 17.1 11.8 17.4 11.8H19.2C19.9 11.8 20.1 12.5 19.8 13.3C18.6 16.5 15.7 18.9 12.2 18.9C9.1 18.9 6.9 16.5 6.9 13.2Z"/><g fill="#000" stroke="none"><rect x="9.5" y="10.6" width="1.1" height="3"/><rect x="10.9" y="10" width="1.1" height="3.6"/><rect x="12.3" y="9.2" width="1.1" height="4.4"/><rect x="13.7" y="8.4" width="1.1" height="5.2"/></g></svg>
<div class="t" style="left:1334.80px;top:523.00px;font-size:13.60px;font-weight:400;color:#68787e;">09 июля 2024 г., 09:39</div>
<svg class="ic" style="left:1304px;top:538.6px" width="26" height="26" viewBox="0 0 26 26" fill="none" stroke="#000" stroke-width="1.75"><circle cx="13" cy="8.4" r="2.45"/><ellipse cx="13" cy="16.9" rx="4.6" ry="2.85"/></svg>
<div class="t" style="left:1335.00px;top:547.00px;font-size:13.70px;font-weight:400;color:#1ba5c9;">sdh dsh</div>
<svg class="ic" style="left:1304px;top:565.0px" width="26" height="26" viewBox="0 0 26 26" fill="none" stroke="#000" stroke-width="1.75" stroke-linejoin="round"><rect x="6" y="8" width="14.3" height="10.3" rx="3"/><path d="M6.6 9.2L13.8 4.3Q14.8 3.7 15.8 4.5L18.9 8"/><circle cx="18" cy="12.9" r="1.75"/></svg>
<div class="t" style="left:1334.80px;top:572.00px;font-size:13.30px;font-weight:400;color:#68787e;">0 USD</div>
<div class="a" style="left:1306.5px;top:599.0px;width:20px;height:20px;border-radius:50%;overflow:hidden"><svg width="20" height="20" viewBox="0 0 36 36"><rect width="36" height="36" fill="#dce4e6"/><ellipse cx="17.9" cy="36.5" rx="10.5" ry="9.3" fill="#a3b9c5"/><path d="M8.8 17C8.8 14 11 12.5 13 12.5H22C25 12.5 26.5 14.5 26.5 17V19.5C26.5 23 23 25.5 17.6 25.5C12.5 25.5 8.8 23 8.8 19.5Z" fill="#fff"/><path d="M8.3 18C7.8 10 12 6.3 17 6.3C20.5 6.3 23 7 26 7.8L24.5 9.3L30 10.5L26.5 12L28 13.5C26 13.5 25 14.5 24.5 15.5C22.5 13.5 18 14 16 14.5C14 15 12.5 14.5 11.5 13.5C10 14.5 9 16 8.3 18Z" fill="#a3b9c5"/><ellipse cx="14.3" cy="18.7" rx="0.9" ry="1.3" fill="#8fa6b2"/><ellipse cx="20.7" cy="18.7" rx="0.9" ry="1.3" fill="#8fa6b2"/></svg></div>
<div class="t" style="left:1335.00px;top:602.00px;font-size:14.42px;font-weight:400;color:#1b1b1b;">Анна Мороз</div>
<svg class="ic" style="left:1563.5px;top:244.5px" width="13" height="13" viewBox="0 0 13 13" stroke="#6e8e9c" stroke-width="1.9"><path d="M6.5 0V13M0 6.5H13"/></svg>
<div class="t" style="left:1582.00px;top:246.00px;font-size:13.74px;font-weight:700;color:#6e8e9c;">Добавить статус</div>
<div class="a" style="left:1869px;top:769px;width:45px;height:62px;border-radius:10px;background:#fdfefe;box-shadow:0 0 6px rgba(0,0,0,0.08)"></div>
<div class="t" style="left:1868.5px;top:792px;width:33px;font-size:14px;color:#1ba5c9;transform:rotate(-90deg);transform-origin:center;line-height:16px;text-align:center">Чаты</div>
</body></html>
